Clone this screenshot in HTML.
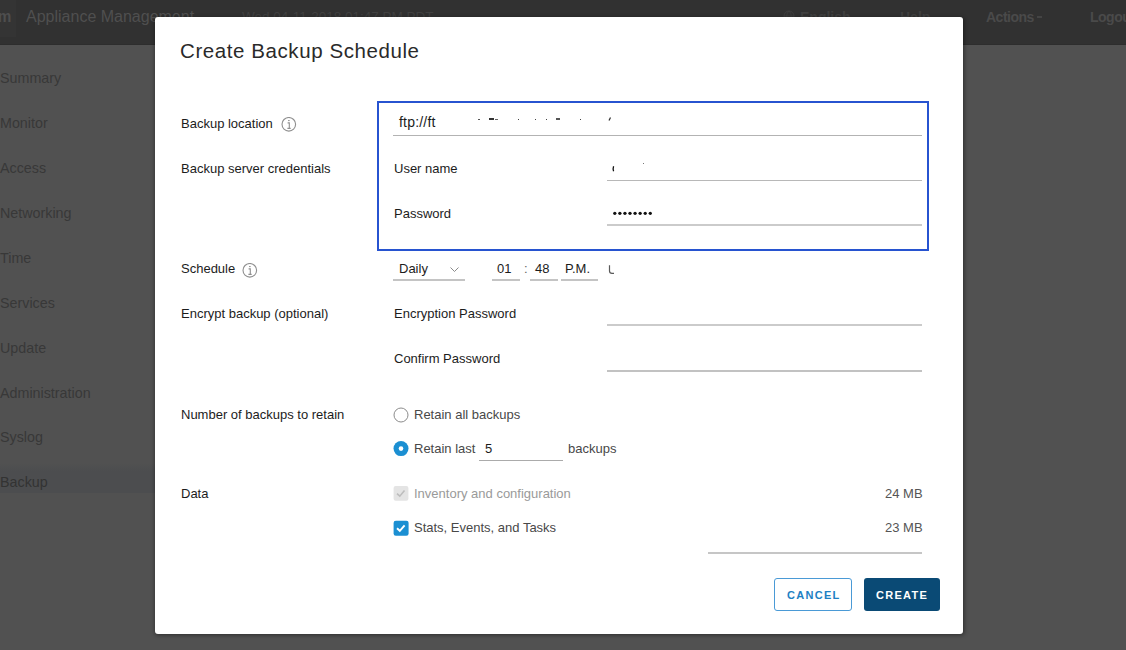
<!DOCTYPE html>
<html><head><meta charset="utf-8">
<style>
*{margin:0;padding:0;box-sizing:border-box}
html,body{width:1126px;height:650px;overflow:hidden}
body{font-family:"Liberation Sans",sans-serif;background:#515151;position:relative;color:#1a1a1a}
.a{position:absolute;white-space:nowrap}
#hdr{position:absolute;left:0;top:0;width:1126px;height:45px;background:#313131;border-bottom:1px solid #2d2d2d}
.hd{color:#5a5a5a;font-size:16px}
.side{color:#383838;font-size:14.3px;left:0}
#modal{position:absolute;left:155px;top:17px;width:808px;height:617px;background:#fff;border-radius:3px;box-shadow:0.5px 1px 4px rgba(0,0,0,.45)}
.lbl{font-size:13px;color:#1c1c1c}
.ul{position:absolute;height:1px;background:#a6a6a6}
.info{position:absolute;width:15px;height:15px}
</style></head><body>
<div id="hdr"></div>
<div class="a" style="left:0;top:0;width:16px;height:37px;background:#343434"></div>
<div class="a hd" style="left:-3px;top:7px;font-size:17px;font-weight:bold;color:#4e4e4e;transform:scaleX(.9)">m</div>
<div class="a hd" style="left:26px;top:8px;font-size:16px;color:#4f4f4f">Appliance Management</div>
<div class="a hd" style="left:242px;top:9px;font-size:13.5px;color:#404040">Wed 04-11-2018 01:47 PM PDT</div>
<svg class="a" style="left:783px;top:10px" width="12" height="12" viewBox="0 0 12 12"><circle cx="6" cy="6" r="5" fill="none" stroke="#3e3e3e" stroke-width="1"/><path d="M1 6H11M6 1C3 4 3 8 6 11M6 1C9 4 9 8 6 11" fill="none" stroke="#3e3e3e" stroke-width="1"/></svg>
<div class="a hd" style="left:800px;top:9px;font-size:14px;color:#404040;font-weight:bold">English</div>
<div class="a hd" style="left:900px;top:9px;font-size:14px;color:#404040;font-weight:bold">Help</div>
<div class="a hd" style="left:986px;top:9px;font-size:14px;color:#4a4a4a;font-weight:bold;letter-spacing:-.5px">Actions</div>
<div class="a" style="left:1037px;top:16px;width:5px;height:2px;background:#444"></div>
<div class="a hd" style="left:1090px;top:9px;font-size:14px;color:#4a4a4a;font-weight:bold;letter-spacing:-.5px">Logout</div>

<div class="a side" style="top:70px">Summary</div>
<div class="a side" style="top:115px">Monitor</div>
<div class="a side" style="top:160px">Access</div>
<div class="a side" style="top:205px">Networking</div>
<div class="a side" style="top:250px">Time</div>
<div class="a side" style="top:295px">Services</div>
<div class="a side" style="top:340px">Update</div>
<div class="a side" style="top:385px">Administration</div>
<div class="a side" style="top:429px">Syslog</div>
<div class="a" style="left:0;top:463px;width:155px;height:30px;background:linear-gradient(to bottom,#515151 0,#4c4d4f 8px,#4c4d4f 100%)"></div>
<div class="a side" style="top:474px;color:#333">Backup</div>

<div id="modal"></div>
<div class="a" style="left:180px;top:39px;font-size:20.5px;letter-spacing:.58px;color:#2a2a2a">Create Backup Schedule</div>

<div class="a lbl" style="left:181px;top:116px">Backup location</div>
<div class="a lbl" style="left:181px;top:161px">Backup server credentials</div>
<div class="a lbl" style="left:181px;top:261px">Schedule</div>
<div class="a lbl" style="left:181px;top:306px">Encrypt backup (optional)</div>
<div class="a lbl" style="left:181px;top:407px">Number of backups to retain</div>
<div class="a lbl" style="left:181px;top:486px">Data</div>

<!-- blue box -->
<div class="a" style="left:377px;top:101px;width:552px;height:150px;border:2px solid #2753d0"></div>
<div class="a lbl" style="left:399px;top:114px;font-size:14px;letter-spacing:.2px">ftp://ft</div>
<div class="ul" style="left:393px;top:135px;width:529px;background:#b3b3b3"></div>
<div class="a lbl" style="left:394px;top:161px">User name</div>
<div class="ul" style="left:607px;top:180px;width:315px;background:#b8b8b8"></div>
<div class="a lbl" style="left:394px;top:206px">Password</div>
<div class="ul" style="left:607px;top:224px;width:315px;height:2px;background:#cbcbcb"></div>
<svg class="a" style="left:610px;top:208px" width="46" height="10" viewBox="0 0 46 10"><circle cx="4.80" cy="5.3" r="1.65" fill="#111"/><circle cx="9.87" cy="5.3" r="1.65" fill="#111"/><circle cx="14.94" cy="5.3" r="1.65" fill="#111"/><circle cx="20.01" cy="5.3" r="1.65" fill="#111"/><circle cx="25.08" cy="5.3" r="1.65" fill="#111"/><circle cx="30.15" cy="5.3" r="1.65" fill="#111"/><circle cx="35.22" cy="5.3" r="1.65" fill="#111"/><circle cx="40.29" cy="5.3" r="1.65" fill="#111"/></svg>

<!-- schedule -->
<div class="a lbl" style="left:399px;top:261px">Daily</div>
<div class="ul" style="left:393px;top:279px;width:72px;height:2px;background:#c4c4c4"></div>
<div class="a lbl" style="left:497px;top:261px">01</div>
<div class="ul" style="left:492px;top:279px;width:28px;height:2px;background:#c4c4c4"></div>
<div class="a lbl" style="left:524px;top:261px;color:#666">:</div>
<div class="a lbl" style="left:535px;top:261px">48</div>
<div class="ul" style="left:530px;top:279px;width:28px;height:2px;background:#c4c4c4"></div>
<div class="a lbl" style="left:565px;top:261px">P.M.</div>
<div class="ul" style="left:561px;top:279px;width:37px;height:2px;background:#c4c4c4"></div>

<div class="a lbl" style="left:394px;top:306px">Encryption Password</div>
<div class="ul" style="left:607px;top:324px;width:315px;height:2px;background:#cbcbcb"></div>
<div class="a lbl" style="left:394px;top:351px">Confirm Password</div>
<div class="ul" style="left:607px;top:370px;width:315px;height:2px;background:#c2c2c2"></div>

<div class="a lbl" style="left:414px;top:407px;color:#484848">Retain all backups</div>
<div class="a lbl" style="left:414px;top:441px;color:#484848">Retain last</div>
<div class="a lbl" style="left:485px;top:441px">5</div>
<div class="ul" style="left:479px;top:460px;width:84px;background:#ababab"></div>
<div class="a lbl" style="left:568px;top:441px;color:#484848">backups</div>

<div class="a lbl" style="left:414px;top:486px;color:#9a9a9a">Inventory and configuration</div>
<div class="a lbl" style="left:885px;top:486px;color:#555">24 MB</div>
<div class="a lbl" style="left:414px;top:520px;color:#484848">Stats, Events, and Tasks</div>
<div class="a lbl" style="left:885px;top:520px;color:#555">23 MB</div>
<div class="ul" style="left:708px;top:552px;width:214px;height:2px;background:#c6c6c6"></div>

<div class="a" style="left:774px;top:578px;width:78px;height:33px;border:1px solid #4a9ad6;border-radius:3px"></div>
<div class="a" style="left:787px;top:589px;font-size:11px;font-weight:bold;letter-spacing:1.3px;color:#1e80c3">CANCEL</div>
<div class="a" style="left:864px;top:578px;width:76px;height:33px;background:#0a4a75;border-radius:3px"></div>
<div class="a" style="left:876px;top:589px;font-size:11px;font-weight:bold;letter-spacing:1.3px;color:#fff">CREATE</div>


<!-- redacted fragments -->
<div class="a" style="left:478px;top:119px;width:2px;height:1px;background:#555"></div>
<div class="a" style="left:489px;top:118px;width:5px;height:2px;background:#333"></div>
<div class="a" style="left:495px;top:119px;width:3px;height:1px;background:#666"></div>
<div class="a" style="left:518px;top:119px;width:1px;height:1px;background:#444"></div>
<div class="a" style="left:535px;top:119px;width:1px;height:1px;background:#444"></div>
<div class="a" style="left:546px;top:119px;width:1px;height:1px;background:#444"></div>
<div class="a" style="left:556px;top:118px;width:4px;height:2px;background:#555"></div>
<div class="a" style="left:580px;top:119px;width:1px;height:1px;background:#444"></div>
<svg class="a" style="left:607px;top:116px" width="6" height="6" viewBox="0 0 6 6"><path d="M2 4.5L3.5 1.5" stroke="#333" stroke-width="1.2"/></svg>
<svg class="a" style="left:610px;top:165px" width="6" height="8" viewBox="0 0 6 8"><path d="M3.6 1.2Q2.7 3.5 3.6 6.2" fill="none" stroke="#111" stroke-width="1.3"/></svg>
<div class="a" style="left:643px;top:163px;width:1px;height:1px;background:#777"></div>
<svg class="a" style="left:605px;top:261px" width="14" height="16" viewBox="0 0 14 16"><path d="M4.5 4.2V10Q4.5 12.3 7 12.3H9" fill="none" stroke="#5a5a5a" stroke-width="1.2"/></svg>
<!-- info icons -->
<svg class="a" style="left:281px;top:117px" width="16" height="16" viewBox="0 0 16 16"><circle cx="7.8" cy="7.3" r="6.8" fill="none" stroke="#8f8f8f" stroke-width="1.1"/><rect x="7.1" y="3.0" width="1.5" height="1.1" fill="#8f8f8f"/><path d="M6.6 5.9H8.3V11.2M6.4 11.4H9.7" fill="none" stroke="#8f8f8f" stroke-width="1.1"/></svg>
<svg class="a" style="left:242px;top:263px" width="16" height="16" viewBox="0 0 16 16"><circle cx="7.8" cy="7.3" r="6.8" fill="none" stroke="#8f8f8f" stroke-width="1.1"/><rect x="7.1" y="3.0" width="1.5" height="1.1" fill="#8f8f8f"/><path d="M6.6 5.9H8.3V11.2M6.4 11.4H9.7" fill="none" stroke="#8f8f8f" stroke-width="1.1"/></svg>
<!-- chevron -->
<svg class="a" style="left:449px;top:266px" width="12" height="8" viewBox="0 0 12 8"><path d="M1.5 1.5L5.5 5.5L9.5 1.5" fill="none" stroke="#8a8a8a" stroke-width="1"/></svg>
<!-- radios -->
<svg class="a" style="left:393px;top:407px" width="16" height="16" viewBox="0 0 16 16"><circle cx="8" cy="8" r="7" fill="#fff" stroke="#8c8c8c" stroke-width="1"/></svg>
<svg class="a" style="left:393px;top:441px" width="16" height="16" viewBox="0 0 16 16"><circle cx="8" cy="7.6" r="7.5" fill="#1b8fd2"/><circle cx="8" cy="7.6" r="2.3" fill="#fff"/></svg>
<!-- checkboxes -->
<svg class="a" style="left:393px;top:485px" width="16" height="16" viewBox="0 0 16 16"><rect x="0.6" y="1" width="14.8" height="14.8" rx="2" fill="#e4e4e4"/><path d="M4 8.6L6.8 11.2L11.5 5.6" fill="none" stroke="#bdbdbd" stroke-width="1.6"/></svg>
<svg class="a" style="left:393px;top:520px" width="16" height="16" viewBox="0 0 16 16"><rect x="0.6" y="0.8" width="15" height="15" rx="2.2" fill="#1b8fd2"/><path d="M4 8.3L6.8 10.8L11.6 5.3" fill="none" stroke="#fff" stroke-width="1.9"/></svg>
</body></html>
